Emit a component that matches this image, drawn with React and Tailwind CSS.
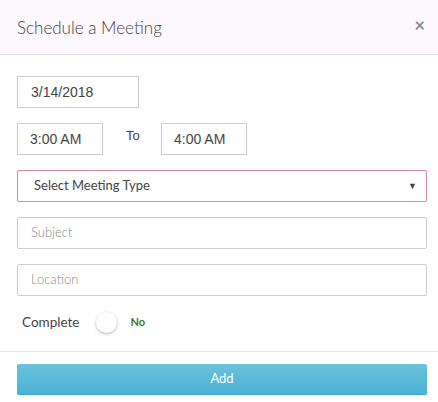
export default function App() {
  const lato = { fontFamily: 'Lato, "Open Sans", sans-serif' };
  const arial = { fontFamily: '"Liberation Sans", Arial, sans-serif' };
  return (
    <div className="w-[438px] h-[402px] bg-white overflow-hidden" style={lato}>
      <div className="h-[55px] bg-[#fdf8fd] border-b border-[#e5e5e5] flex items-center justify-between pl-[17px] pr-[13px] w-[438px]">
        <div className="text-[17px] font-light text-[#444] leading-none pt-[1px]">Schedule a Meeting</div>
        <div className="text-[18px] text-[#8a8a8a] font-bold leading-none -mt-[4px]">×</div>
      </div>
      <div className="pl-[17px] pt-[21px] pb-[18px] flex flex-col gap-[15px] border-b border-[#e5e5e5]">
        <div className="w-[122px] h-[32px] border border-[#ccc] flex items-center pl-[13px] text-[14px] text-[#444]" style={arial}>3/14/2018</div>
        <div className="flex items-center">
          <div className="w-[86px] h-[32px] border border-[#ccc] flex items-center pl-[12px] text-[14px] text-[#444]" style={arial}>3:00 AM</div>
          <div className="w-[58px] text-[13px] text-[#444] pl-[23px] -mt-[6px]" style={arial}>To</div>
          <div className="w-[86px] h-[32px] border border-[#ccc] flex items-center pl-[12px] text-[14px] text-[#444]" style={arial}>4:00 AM</div>
        </div>
        <div className="w-[410px] h-[32px] border border-[#d8899c] rounded-[2px] flex items-center justify-between pl-[16px] pr-[9px] text-[13px] text-[#444]">
          <span>Select Meeting Type</span>
          <span className="text-[9px] text-[#444]">▼</span>
        </div>
        <div className="w-[410px] h-[32px] border border-[#ccc] rounded-[2px] flex items-center pl-[13px] text-[13px] font-light text-[#888]">Subject</div>
        <div className="w-[410px] h-[32px] border border-[#ccc] rounded-[2px] flex items-center pl-[13px] text-[13px] font-light text-[#888]">Location</div>
        <div className="flex items-center h-[22px] pl-[5px]">
          <span className="text-[13.5px] text-[#444]">Complete</span>
          <span className="ml-[17px] w-[21px] h-[21px] rounded-full bg-white shadow-[0_1px_3px_rgba(0,0,0,0.3)]"></span>
          <span className="ml-[13px] text-[11px] font-bold text-[#3b7a2b]">No</span>
        </div>
      </div>
      <div className="pl-[17px] pt-[12px]">
        <div className="w-[410px] h-[31px] rounded-[2px] bg-gradient-to-b from-[#6ac2dc] to-[#4cb2d5] border-b border-[#3ba9cf] flex items-center justify-center text-white text-[13px]">Add</div>
      </div>
    </div>
  );
}
